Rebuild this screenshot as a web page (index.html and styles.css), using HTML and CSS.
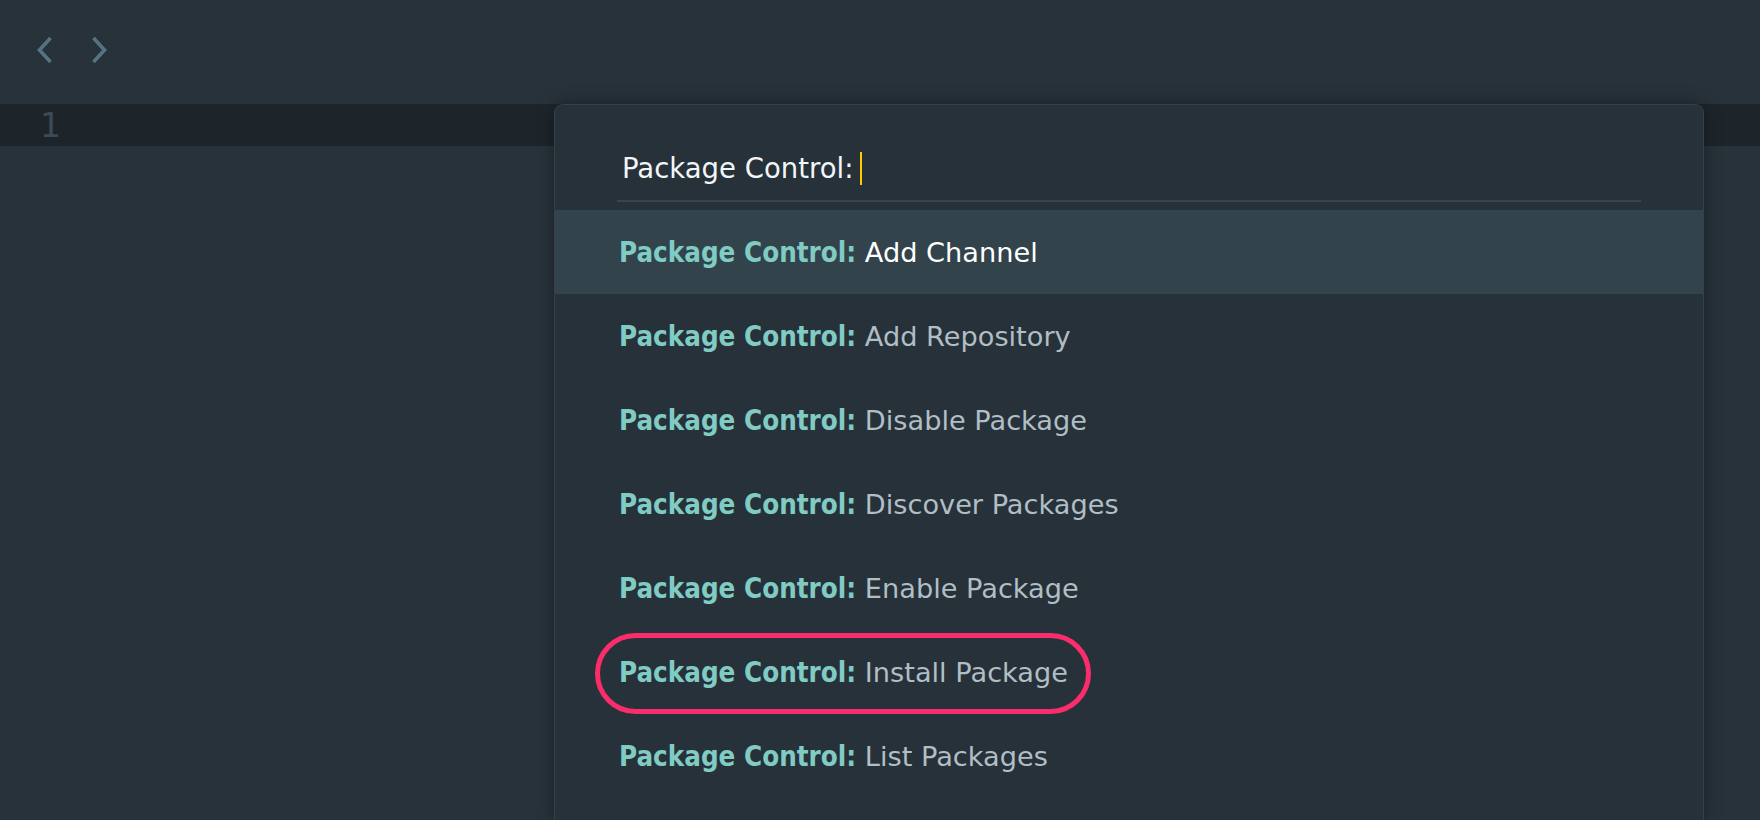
FILE: index.html
```html
<!DOCTYPE html>
<html>
<head>
<meta charset="utf-8">
<link rel="stylesheet" href="styles.css">
</head>
<body>
<div class="app">
  <header class="toolbar">
    <svg class="nav" width="16" height="28" viewBox="0 0 16 28"><path d="M13.5 2 L2.5 14 L13.5 26" fill="none" stroke="#557481" stroke-width="3.6"/></svg>
    <svg class="nav" width="16" height="28" viewBox="0 0 16 28"><path d="M2.5 2 L13.5 14 L2.5 26" fill="none" stroke="#557481" stroke-width="3.6"/></svg>
  </header>
  <main class="editor">
    <div class="line current"><span class="gutter">1</span></div>
    <section class="palette">
      <div class="input-wrap">
        <div class="input"><span class="typed">Package Control:</span><span class="caret"></span></div>
      </div>
      <ul class="list">
        <li class="item selected"><b>Package Control:</b> Add Channel</li>
        <li class="item"><b>Package Control:</b> Add Repository</li>
        <li class="item"><b>Package Control:</b> Disable Package</li>
        <li class="item"><b>Package Control:</b> Discover Packages</li>
        <li class="item"><b>Package Control:</b> Enable Package</li>
        <li class="item marked"><b>Package Control:</b> Install Package<span class="ring"></span></li>
        <li class="item"><b>Package Control:</b> List Packages</li>
      </ul>
    </section>
  </main>
</div>
</body>
</html>
```
FILE: styles.css
```css
* { box-sizing: border-box; }
html, body {
  margin: 0;
  padding: 0;
  height: 100%;
  overflow: hidden;
  background: #27323a;
  font-family: "DejaVu Sans", "Liberation Sans", sans-serif;
}
.app {
  width: 1760px;
  height: 820px;
  display: flex;
  flex-direction: column;
  overflow: hidden;
}
.toolbar {
  height: 104px;
  flex: none;
  display: flex;
  align-items: center;
  gap: 38px;
  padding-left: 37px;
  padding-bottom: 4px;
}
.nav { display: block; }
.editor {
  position: relative;
  flex: 1;
}
.line.current {
  height: 42px;
  background: #1d252b;
  display: flex;
  align-items: center;
}
.gutter {
  padding-left: 40px;
  font-size: 33px;
  line-height: 1;
  color: #3b4c56;
}
.palette {
  position: absolute;
  left: 554px;
  top: 0;
  width: 1150px;
  bottom: 0;
  background: #273139;
  border: 1px solid #32414a;
  border-bottom: none;
  border-radius: 9px 9px 0 0;
  box-shadow: 0 0 18px rgba(0, 0, 0, 0.35);
}
.input-wrap {
  margin: 0 62px;
  height: 97px;
  border-bottom: 2px solid #35454e;
  display: flex;
  align-items: flex-end;
  padding: 0 0 15px 5px;
}
.input {
  display: flex;
  align-items: center;
  color: #f2f6f8;
  font-size: 27.5px;
  line-height: 34px;
}
.caret {
  display: inline-block;
  width: 2px;
  height: 33px;
  background: #ffcc00;
  margin-left: 7px;
}
.list {
  list-style: none;
  margin: 8px 0 0;
  padding: 0;
}
.item {
  position: relative;
  height: 84px;
  display: flex;
  align-items: center;
  padding-left: 64px;
  font-size: 27.2px;
  color: #b0bec5;
  white-space: pre;
}
.item b {
  color: #80cbc4;
  font-family: "DejaVu Sans Condensed", "DejaVu Sans", sans-serif;
  font-weight: bold;
  font-size: 27.5px;
}
.item.selected {
  background: #32434c;
  color: #ffffff;
}
.ring {
  position: absolute;
  left: 40px;
  top: 3px;
  width: 496px;
  height: 81px;
  border: 5px solid #fb2c6b;
  border-radius: 41px;
}
```
